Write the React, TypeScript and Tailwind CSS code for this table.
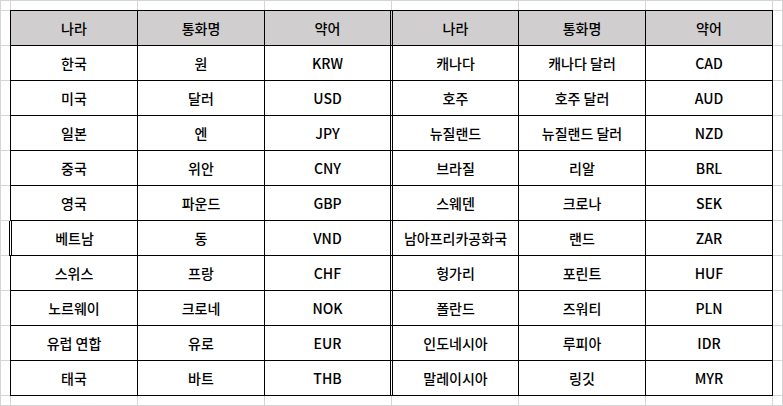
import React from 'react';

type Row = [string, string, string, string, string, string];

const header: Row = ['나라', '통화명', '약어', '나라', '통화명', '약어'];

const rows: Row[] = [
  ['한국', '원', 'KRW', '캐나다', '캐나다 달러', 'CAD'],
  ['미국', '달러', 'USD', '호주', '호주 달러', 'AUD'],
  ['일본', '엔', 'JPY', '뉴질랜드', '뉴질랜드 달러', 'NZD'],
  ['중국', '위안', 'CNY', '브라질', '리알', 'BRL'],
  ['영국', '파운드', 'GBP', '스웨덴', '크로나', 'SEK'],
  ['베트남', '동', 'VND', '남아프리카공화국', '랜드', 'ZAR'],
  ['스위스', '프랑', 'CHF', '헝가리', '포린트', 'HUF'],
  ['노르웨이', '크로네', 'NOK', '폴란드', '즈워티', 'PLN'],
  ['유럽 연합', '유로', 'EUR', '인도네시아', '루피아', 'IDR'],
  ['태국', '바트', 'THB', '말레이시아', '링깃', 'MYR'],
];

// border per column: first gets a left edge, third ends in the double rule
const colBorder = [
  'border-l border-r',
  'border-r',
  'border-r-[3px] border-double',
  'border-r',
  'border-r',
  'border-r',
];

function Cell({ text, col, head, odd }: { text: string; col: number; head?: boolean; odd?: boolean }) {
  return (
    <div
      className={[
        'flex items-center justify-center border-b border-black text-[14px] font-medium text-black',
        colBorder[col],
        head ? 'bg-[#d0cece]' : 'bg-white',
        odd ? '-ml-px border-l-[3px] border-double' : '',
      ].join(' ')}
    >
      {text}
    </div>
  );
}

export default function App() {
  // sheet margin cells around the table: 8 x 13 grid minus the 6 x 11 table block
  const margins = Array.from({ length: 8 * 13 - 6 * 11 });

  return (
    <div
      className="w-[783px] h-[406px] bg-white"
      style={{ fontFamily: '"Noto Sans CJK KR", "Noto Sans", sans-serif' }}
    >
      <div className="grid grid-cols-[9px_repeat(6,126px)_9px] grid-rows-[9px_repeat(11,34px)_9px] gap-px bg-[#d4d4d4] p-px">
        {margins.map((_, i) => (
          <div key={i} className="bg-white" />
        ))}
        <div className="col-start-2 col-span-6 row-start-2 row-span-11 -m-px grid grid-cols-[128px_127px_128px_126px_127px_127px] grid-rows-[repeat(11,35px)] border-t border-black bg-white leading-none">
          {header.map((h, c) => (
            <Cell key={'h' + c} text={h} col={c} head />
          ))}
          {rows.map((r, ri) =>
            r.map((t, c) => (
              <Cell key={ri + '-' + c} text={t} col={c} odd={ri === 5 && c === 0} />
            )),
          )}
        </div>
      </div>
    </div>
  );
}
